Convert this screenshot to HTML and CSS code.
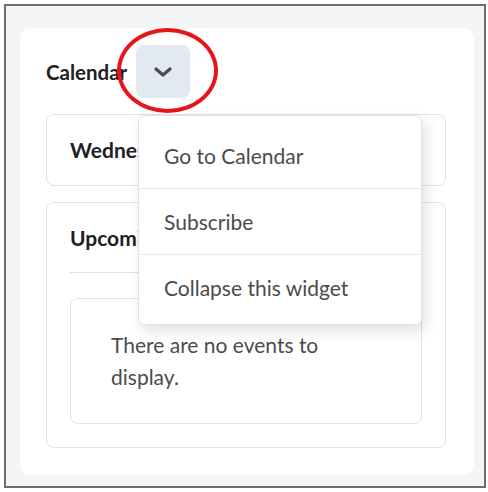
FILE: index.html
```html
<!DOCTYPE html>
<html lang="en">
<head>
    <meta charset="UTF-8">
    <title>Calendar widget</title>
    <link rel="stylesheet" href="styles.css">
</head>
<body>
    <div class="frame">
        <div class="widget">
            <div class="widget-header">
                <h2>Calendar</h2>
                <button class="menu-toggle" type="button" aria-label="Calendar options">
                    <svg width="20" height="12" viewBox="0 0 20 12">
                        <polyline points="3,3 10,9 17,3" fill="none" stroke="#494c4e" stroke-width="3.2" stroke-linecap="round" stroke-linejoin="round"/>
                    </svg>
                </button>
                <span class="highlight"></span>
            </div>

            <div class="panel day-panel">
                <h3>Wednesday, January 8</h3>
            </div>

            <div class="panel upcoming-panel">
                <h3>Upcoming events</h3>
                <hr class="divider">
                <div class="empty-box">
                    There are no events to display.
                </div>
            </div>

            <ul class="dropdown">
                <li>Go to Calendar</li>
                <li>Subscribe</li>
                <li>Collapse this widget</li>
            </ul>
        </div>
    </div>
</body>
</html>
```

FILE: styles.css
```css
* {
    margin: 0;
    padding: 0;
    box-sizing: border-box;
}

body {
    font-family: 'Lato', 'Liberation Sans', sans-serif;
    background: #ffffff;
    padding: 4px;
}

.frame {
    height: 484px;
    width: 482px;
    border: 2px solid #6e6e6e;
    background: #f4f5f7;
    padding: 22px 10px 11px 14px;
}

.widget {
    position: relative;
    height: 100%;
    background: #ffffff;
    border-radius: 10px;
    padding: 17px 28px 27px 26px;
}

.widget-header {
    position: relative;
    display: flex;
    align-items: center;
    gap: 9px;
    height: 53px;
    margin-bottom: 16px;
}

.widget-header h2 {
    font-size: 20.5px;
    font-weight: 700;
    color: #202122;
}

.menu-toggle {
    width: 54px;
    height: 53px;
    border: none;
    border-radius: 8px;
    background: #e3e9f1;
    display: flex;
    align-items: center;
    justify-content: center;
}

/* red annotation ring around the menu button */
.highlight {
    position: absolute;
    left: 71px;
    top: -17px;
    width: 101px;
    height: 85px;
    border: 4px solid #e8141c;
    border-radius: 50%;
}

.panel {
    border: 1px solid #dfe3e8;
    border-radius: 8px;
}

.panel h3 {
    font-size: 21px;
    font-weight: 700;
    color: #202122;
    line-height: 24px;
    white-space: nowrap;
}

.day-panel {
    height: 72px;
    padding: 23px 23px;
    margin-bottom: 16px;
}

.upcoming-panel {
    height: 246px;
    padding: 23px 23px 23px 23px;
}

.divider {
    border: none;
    border-top: 1px solid #dfe3e8;
    margin: 22px 0 25px;
}

.empty-box {
    height: 126px;
    border: 1px solid #dfe3e8;
    border-radius: 8px;
    padding: 30px 60px 30px 40px;
    font-size: 21px;
    line-height: 32px;
    color: #494c4e;
}

.dropdown {
    position: absolute;
    left: 118px;
    top: 87px;
    width: 284px;
    height: 210px;
    list-style: none;
    background: #ffffff;
    border: 1px solid #dfe3e8;
    border-radius: 6px;
    padding: 6px 0 5px;
    box-shadow: 4px 6px 14px rgba(0, 0, 0, 0.12);
}

.dropdown li {
    height: 66px;
    display: flex;
    align-items: center;
    padding-left: 25px;
    font-size: 21px;
    color: #494c4e;
}

.dropdown li + li {
    border-top: 1px solid #e6e9ed;
}
```
